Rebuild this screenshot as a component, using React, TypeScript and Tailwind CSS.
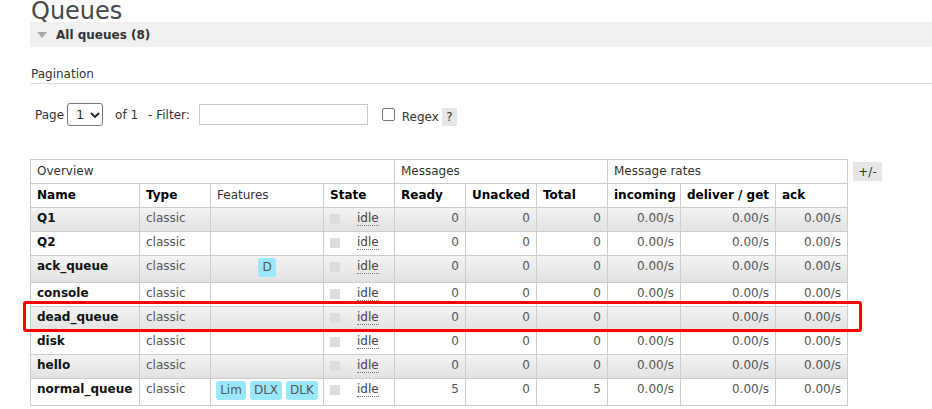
import React from "react";

type Row = {
  name: string;
  features: string[];
  ready: number;
  unacked: number;
  total: number;
  incoming: string;
  deliver: string;
  ack: string;
};

const rows: Row[] = [
  { name: "Q1", features: [], ready: 0, unacked: 0, total: 0, incoming: "0.00/s", deliver: "0.00/s", ack: "0.00/s" },
  { name: "Q2", features: [], ready: 0, unacked: 0, total: 0, incoming: "0.00/s", deliver: "0.00/s", ack: "0.00/s" },
  { name: "ack_queue", features: ["D"], ready: 0, unacked: 0, total: 0, incoming: "0.00/s", deliver: "0.00/s", ack: "0.00/s" },
  { name: "console", features: [], ready: 0, unacked: 0, total: 0, incoming: "0.00/s", deliver: "0.00/s", ack: "0.00/s" },
  { name: "dead_queue", features: [], ready: 0, unacked: 0, total: 0, incoming: "", deliver: "0.00/s", ack: "0.00/s" },
  { name: "disk", features: [], ready: 0, unacked: 0, total: 0, incoming: "0.00/s", deliver: "0.00/s", ack: "0.00/s" },
  { name: "hello", features: [], ready: 0, unacked: 0, total: 0, incoming: "0.00/s", deliver: "0.00/s", ack: "0.00/s" },
  { name: "normal_queue", features: ["Lim", "DLX", "DLK"], ready: 5, unacked: 0, total: 5, incoming: "0.00/s", deliver: "0.00/s", ack: "0.00/s" },
];

const td = "border border-[#ccc] px-[6px] pt-[3px] pb-[5px] leading-[15px] align-top whitespace-nowrap";
const th = "border border-[#ccc] px-[6px] pt-[4px] pb-[4px] leading-[15px] text-left align-top whitespace-nowrap";

export default function App() {
  return (
    <div className="min-h-screen bg-white font-['DejaVu_Sans',sans-serif] text-[12px] text-[#333] pl-[30px] overflow-hidden">
      {/* Title */}
      <h1 className="h-[22px] text-[24px] leading-[22px] text-[#484848] pl-px">Queues</h1>

      {/* Section bar */}
      <div className="h-[25px] bg-[#f0f0f0] flex items-center">
        <svg width="10" height="6" viewBox="0 0 10 6" className="ml-[7px]">
          <polygon points="0,0 10,0 5,6" fill="#a8a8a8" />
        </svg>
        <span className="ml-[9px] font-bold text-[#333]">All queues (8)</span>
      </div>

      {/* Pagination */}
      <div className="mt-[20px] leading-[15px] pb-[1px] pl-px border-b border-[#ddd] text-[#333]">Pagination</div>

      <div className="mt-[19px] flex items-center h-[23px] text-[#333]">
        <span className="ml-[5px]">Page</span>
        <div className="ml-[3px] w-[36px] h-[23px] border border-[#767676] rounded-[3px] flex items-center bg-white">
          <span className="ml-[8px] text-[13px]">1</span>
          <svg width="10" height="6" viewBox="0 0 10 6" className="ml-[6px]">
            <path d="M1 1 L5 5 L9 1" fill="none" stroke="#222" strokeWidth="1.8" />
          </svg>
        </div>
        <span className="ml-[12px]">of 1</span>
        <span className="ml-[10px]">- Filter:</span>
        <input type="text" className="ml-[9px] w-[169px] h-[21px] border border-[#c8c8c8] outline-none" />
        <div className="ml-[14px] w-[13px] h-[13px] border border-[#767676] rounded-[2px] bg-white" />
        <span className="ml-[7px] mt-[5px]">Regex</span>
        <span className="ml-[3px] mt-[5px] w-[15px] h-[18px] bg-[#e6e6e6] flex items-center justify-center text-[#333]">?</span>
      </div>

      {/* Table */}
      <div className="mt-[33px] flex items-start">
        <div className="relative">
          <table className="table-fixed border-collapse w-[817px]">
            <colgroup>
              <col className="w-[109px]" />
              <col className="w-[71px]" />
              <col className="w-[113px]" />
              <col className="w-[71px]" />
              <col className="w-[71px]" />
              <col className="w-[71px]" />
              <col className="w-[71px]" />
              <col className="w-[73px]" />
              <col className="w-[95px]" />
              <col className="w-[72px]" />
            </colgroup>
            <thead>
              <tr className="h-[24px]">
                <th colSpan={4} className={`${th} font-normal text-[#333]`}>Overview</th>
                <th colSpan={3} className={`${th} font-normal text-[#333]`}>Messages</th>
                <th colSpan={3} className={`${th} font-normal text-[#333]`}>Message rates</th>
              </tr>
              <tr className="h-[24px] text-black">
                <th className={`${th} font-bold`}>Name</th>
                <th className={`${th} font-bold`}>Type</th>
                <th className={`${th} font-normal text-[#333]`}>Features</th>
                <th className={`${th} font-bold`}>State</th>
                <th className={`${th} font-bold`}>Ready</th>
                <th className={`${th} font-bold`}>Unacked</th>
                <th className={`${th} font-bold`}>Total</th>
                <th className={`${th} font-bold`}>incoming</th>
                <th className={`${th} font-bold`}>deliver / get</th>
                <th className={`${th} font-bold`}>ack</th>
              </tr>
            </thead>
            <tbody>
              {rows.map((r, i) => (
                <tr key={r.name} className={i % 2 === 0 ? "bg-linear-to-b from-[#f3f3f3] to-[#e1e1e1]" : "bg-white"}>
                  <td className={`${td} font-bold text-[#111]`}>{r.name}</td>
                  <td className={`${td} text-[#555]`}>classic</td>
                  {r.features.length > 0 ? (
                    <td className="border border-[#ccc] px-[6px] pt-[2px] pb-[5px] leading-[15px] align-top">
                      <div className="flex justify-center gap-[4px]">
                        {r.features.map((f) => (
                          <span key={f} className="px-[4px] py-[2px] leading-[15px] rounded-[3px] bg-[#99e8fb] text-[#555]">
                            {f}
                          </span>
                        ))}
                      </div>
                    </td>
                  ) : (
                    <td className={td} />
                  )}
                  <td className={td}>
                    <div className="flex items-start">
                      <span className="mt-[3px] w-[10px] h-[10px] bg-[#dcdcdc]" />
                      <span className="ml-[17px] text-[#444] border-b border-dotted border-[#777] leading-[14px]">idle</span>
                    </div>
                  </td>
                  <td className={`${td} text-right text-[#555]`}>{r.ready}</td>
                  <td className={`${td} text-right text-[#555]`}>{r.unacked}</td>
                  <td className={`${td} text-right text-[#555]`}>{r.total}</td>
                  <td className={`${td} text-right text-[#555]`}>{r.incoming}</td>
                  <td className={`${td} text-right text-[#555]`}>{r.deliver}</td>
                  <td className={`${td} text-right text-[#555]`}>{r.ack}</td>
                </tr>
              ))}
            </tbody>
          </table>
          {/* highlight annotation */}
          <div className="absolute left-[-7px] top-[142px] w-[839px] h-[31px] border-[3px] border-[#f00] rounded-[3px] pointer-events-none" />
        </div>
        <span className="ml-[5px] mt-[3px] w-[29px] h-[19px] bg-[#e6e6e6] flex items-center justify-center text-[#333]">+/-</span>
      </div>
    </div>
  );
}
